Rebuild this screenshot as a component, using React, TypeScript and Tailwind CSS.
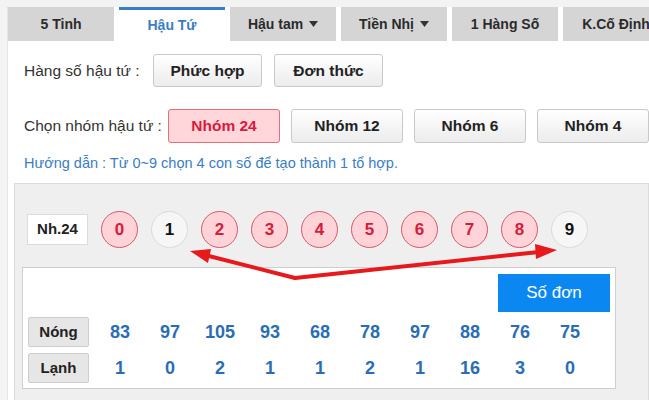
import React from 'react';

const tabs = [
  { label: '5 Tinh' },
  { label: 'Hậu Tứ', active: true },
  { label: 'Hậu tam', caret: true },
  { label: 'Tiền Nhị', caret: true },
  { label: '1 Hàng Số' },
  { label: 'K.Cố Định' },
];

const groups = ['Nhóm 24', 'Nhóm 12', 'Nhóm 6', 'Nhóm 4'];
const picked = [0, 2, 3, 4, 5, 6, 7, 8];
const hot = [83, 97, 105, 93, 68, 78, 97, 88, 76, 75];
const cold = [1, 0, 2, 1, 1, 2, 1, 16, 3, 0];

function Caret() {
  return (
    <svg width="9" height="6" viewBox="0 0 9 6" className="ml-[6px]">
      <path d="M0 0h9L4.5 6z" fill="#333" />
    </svg>
  );
}

function Arrows() {
  return (
    <svg className="absolute left-0 top-0 pointer-events-none" width="640" height="120" viewBox="0 0 640 120">
      <g stroke="#e8191c" strokeWidth="4" strokeLinecap="round" fill="none">
        <line x1="280" y1="94" x2="190" y2="71" />
        <line x1="280" y1="94" x2="524" y2="68" />
      </g>
      <polygon points="175,67 196,65 193,79" fill="#e8191c" />
      <polygon points="542,66 521,75 520,60" fill="#e8191c" />
    </svg>
  );
}

export default function App() {
  return (
    <div
      className="w-[649px] h-[400px] overflow-hidden bg-[#f3f3f3] pl-[7px] pt-[7px] text-[#333]"
      style={{ fontFamily: '"Liberation Sans", Arial, sans-serif' }}
    >
      <div className="h-full bg-white border-l border-[#e4e4e4]">
        <div className="flex gap-[5px]">
          {tabs.map((t) => (
            <div
              key={t.label}
              className={
                t.active
                  ? 'w-[106px] shrink-0 h-[34px] flex items-center justify-center bg-white border-t-[3px] border-[#3a7dc4] text-[#3a7dc4] font-bold text-[14px]'
                  : 'w-[106px] shrink-0 h-[34px] flex items-center justify-center bg-[#d5d5d5] text-[#2b2b2b] font-bold text-[14px]'
              }
            >
              {t.label}
              {t.caret && <Caret />}
            </div>
          ))}
        </div>

        <div className="flex items-center pl-[16px] mt-[13px] h-[33px]">
          <span className="text-[15.5px] text-[#333] w-[129px]">Hàng số hậu tứ :</span>
          <div className="flex gap-[12px]">
            {['Phức hợp', 'Đơn thức'].map((b) => (
              <button
                key={b}
                className="w-[109px] h-[33px] rounded-[3px] border border-[#c9c9c9] bg-gradient-to-b from-white to-[#ececec] font-bold text-[15.5px] text-[#222]"
              >
                {b}
              </button>
            ))}
          </div>
        </div>

        <div className="flex items-center pl-[16px] mt-[22px] h-[34px]">
          <span className="text-[15.5px] text-[#333] w-[148px]">Chọn nhóm hậu tứ :</span>
          <div className="flex gap-[11px]">
            {groups.map((g, i) => (
              <button
                key={g}
                className={
                  i === 0
                    ? 'w-[112px] h-[34px] shrink-0 rounded-[3px] border border-[#e0707e] bg-[#ffd6da] font-bold text-[15.5px] text-[#d91a3c]'
                    : 'w-[112px] h-[34px] shrink-0 rounded-[3px] border border-[#c9c9c9] bg-gradient-to-b from-white to-[#ececec] font-bold text-[15.5px] text-[#222]'
                }
              >
                {g}
              </button>
            ))}
          </div>
        </div>

        <p className="pl-[16px] mt-[10px] text-[14.5px] text-[#3a7dc4] leading-[20px]">
          Hướng dẫn : Từ 0~9 chọn 4 con số để tạo thành 1 tổ hợp.
        </p>

        <div className="relative ml-[6px] mt-[10px] h-[220px] bg-[#efefef] border border-[#dcdcdc] pt-[27px]">
          <div className="flex items-center pl-[12px] gap-[13px]">
            <div className="w-[61px] h-[31px] bg-white border border-[#dcdcdc] flex items-center justify-center font-bold text-[15px] text-[#222]">
              Nh.24
            </div>
            {Array.from({ length: 10 }, (_, n) => (
              <div
                key={n}
                className={
                  picked.includes(n)
                    ? 'w-[37px] h-[37px] shrink-0 rounded-full bg-[#ffd3d8] border border-[#d45a6a] flex items-center justify-center font-bold text-[17px] text-[#d51c3a]'
                    : 'w-[37px] h-[37px] shrink-0 rounded-full bg-[#f6f6f6] border border-[#dadada] flex items-center justify-center font-bold text-[17px] text-[#111]'
                }
              >
                {n}
              </div>
            ))}
          </div>

          <Arrows />

          <div className="ml-[7px] mt-[19px] w-[594px] h-[122px] bg-white border border-[#cfcfcf] pt-[6px] px-[5px]">
            <div className="flex justify-end">
              <div className="w-[112px] h-[38px] bg-[#0b87f2] text-white text-[17px] flex items-center justify-center">
                Số đơn
              </div>
            </div>
            <div className="mt-[5px] flex flex-col gap-[6px]">
              {[
                { label: 'Nóng', vals: hot },
                { label: 'Lạnh', vals: cold },
              ].map((row) => (
                <div key={row.label} className="flex items-center">
                  <div className="w-[61px] h-[30px] shrink-0 rounded-[2px] bg-[#e6e6e6] border border-[#cdcdcd] flex items-center justify-center font-bold text-[15px] text-[#222]">
                    {row.label}
                  </div>
                  <div className="flex ml-[6px]">
                    {row.vals.map((v, i) => (
                      <div key={i} className="w-[50px] text-center font-bold text-[18px] text-[#2a6db5]">
                        {v}
                      </div>
                    ))}
                  </div>
                </div>
              ))}
            </div>
          </div>
        </div>
      </div>
    </div>
  );
}
